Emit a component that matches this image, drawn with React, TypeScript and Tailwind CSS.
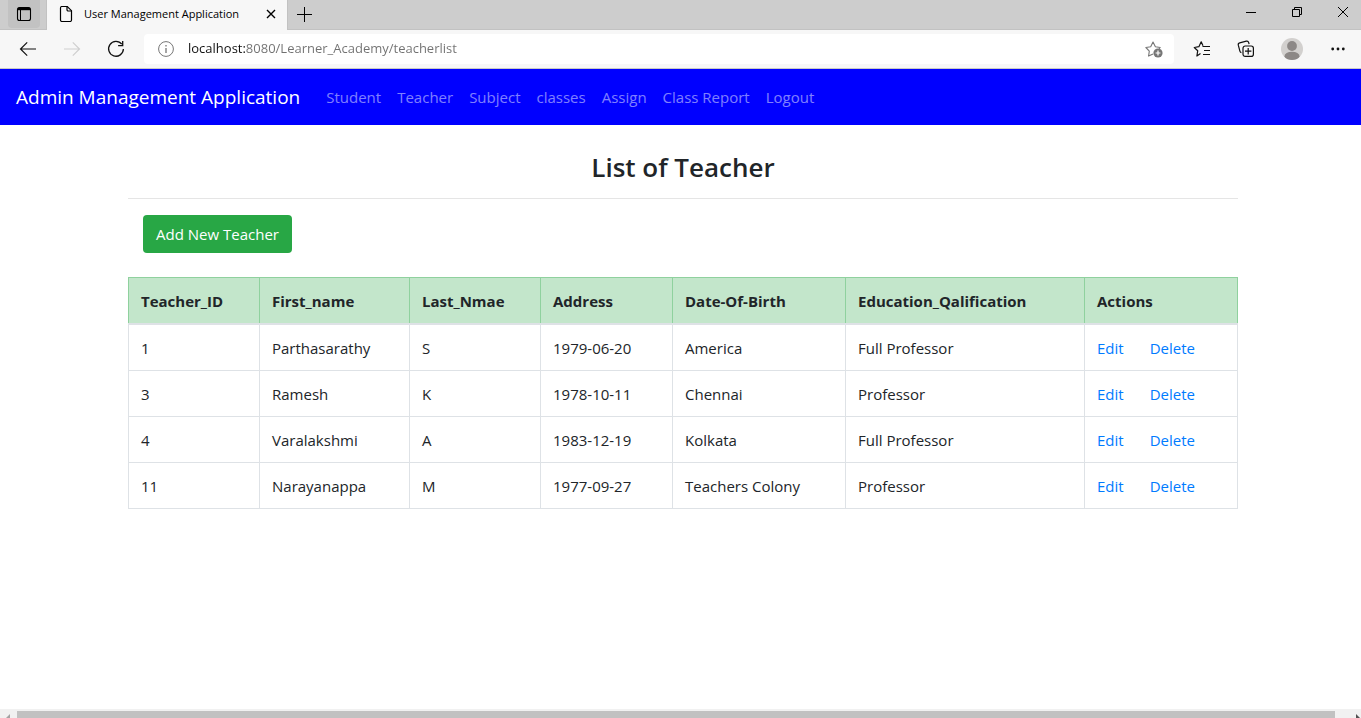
import type { ReactNode } from "react";

type Teacher = {
  id: number;
  first: string;
  last: string;
  address: string;
  birth: string;
  education: string;
};

const navItems = ["Student", "Teacher", "Subject", "classes", "Assign", "Class Report", "Logout"];

const columns = [
  { label: "Teacher_ID", width: "w-[131px]" },
  { label: "First_name", width: "w-[150px]" },
  { label: "Last_Nmae", width: "w-[131px]" },
  { label: "Address", width: "w-[132px]" },
  { label: "Date-Of-Birth", width: "w-[173px]" },
  { label: "Education_Qalification", width: "w-[239px]" },
  { label: "Actions", width: "w-[153px]" },
];

const teachers: Teacher[] = [
  { id: 1, first: "Parthasarathy", last: "S", address: "1979-06-20", birth: "America", education: "Full Professor" },
  { id: 3, first: "Ramesh", last: "K", address: "1978-10-11", birth: "Chennai", education: "Professor" },
  { id: 4, first: "Varalakshmi", last: "A", address: "1983-12-19", birth: "Kolkata", education: "Full Professor" },
  { id: 11, first: "Narayanappa", last: "M", address: "1977-09-27", birth: "Teachers Colony", education: "Professor" },
];

function IconButton({ label, className, children }: { label: string; className: string; children: ReactNode }) {
  return (
    <button type="button" aria-label={label} className={`flex shrink-0 items-center justify-center ${className}`}>
      {children}
    </button>
  );
}

function TabBar() {
  return (
    <div className="flex h-[30px] items-start border-b border-[#c2c2c2] bg-[#cdcdcd] pl-2 text-black">
      <IconButton label="Tab actions" className="h-7 w-8 rounded-b bg-[#c2c2c2]">
        <svg width="16" height="16" viewBox="0 0 16 16" fill="none" stroke="currentColor">
          <rect x="1.5" y="1.5" width="13" height="13" rx="2" strokeWidth="1.1" />
          <path d="M2 3h12" strokeWidth="2.4" />
          <path d="M4.5 4v10.5" />
        </svg>
      </IconButton>
      <div className="ml-1.5 flex h-[30px] w-[242px] items-center border-x border-[#c2c2c2] bg-[#f7f7f7] pb-0.5 pl-3">
        <svg width="14" height="18" viewBox="0 0 14 18" fill="none" stroke="currentColor" strokeWidth="1.2" className="shrink-0">
          <path d="M2.5 1.5h5.8l4.2 4.2v9.3a1.5 1.5 0 0 1-1.5 1.5H2.5a1.5 1.5 0 0 1-1-1.5v-12a1.5 1.5 0 0 1 1-1.5z" />
          <path d="M8 1.5v3.3a1.2 1.2 0 0 0 1.2 1.2h3.3" />
        </svg>
        <span className="ml-[11px] flex-1 whitespace-nowrap text-[11px]">User Management Application</span>
        <IconButton label="Close tab" className="h-6 w-8">
          <svg width="10" height="10" viewBox="0 0 10 10" stroke="currentColor" strokeWidth="1.4">
            <path d="M1 1l8 8M9 1l-8 8" />
          </svg>
        </IconButton>
      </div>
      <IconButton label="New tab" className="h-7 w-[33px]">
        <svg width="15" height="15" viewBox="0 0 15 15" stroke="currentColor">
          <path d="M7.5 0v15M0 7.5h15" />
        </svg>
      </IconButton>
      <div className="ml-auto flex gap-2.5">
        <IconButton label="Minimize" className="h-6 w-9">
          <svg width="10" height="10" viewBox="0 0 10 10" stroke="currentColor">
            <path d="M0 5.5h10" />
          </svg>
        </IconButton>
        <IconButton label="Restore" className="h-6 w-9">
          <svg width="10" height="10" viewBox="0 0 10 10" fill="none" stroke="currentColor">
            <path d="M.5 2.5h7v7h-7zM2.5 2.5v-2h7v7h-2" />
          </svg>
        </IconButton>
        <IconButton label="Close window" className="h-6 w-9">
          <svg width="10" height="10" viewBox="0 0 10 10" stroke="currentColor">
            <path d="M0 0l10 10M10 0L0 10" />
          </svg>
        </IconButton>
      </div>
    </div>
  );
}

function Toolbar() {
  return (
    <div className="flex h-[39px] items-center border-b border-[#c8c8c8] bg-[#f7f7f7] pl-1.5 text-[#111]">
      <IconButton label="Back" className="h-8 w-11">
        <svg width="18" height="16" viewBox="0 0 18 16" fill="none" stroke="currentColor" strokeWidth="1.2">
          <path d="M17 8H1.5M8.2 1.3L1.5 8l6.7 6.7" />
        </svg>
      </IconButton>
      <IconButton label="Forward" className="h-8 w-11 text-[#cfcfcf]">
        <svg width="18" height="16" viewBox="0 0 18 16" fill="none" stroke="currentColor" strokeWidth="1.2">
          <path d="M1 8h15.5M9.8 1.3L16.5 8l-6.7 6.7" />
        </svg>
      </IconButton>
      <IconButton label="Refresh" className="h-8 w-11">
        <svg width="18" height="18" viewBox="0 0 18 18" fill="none" stroke="currentColor" strokeWidth="1.3">
          <path d="M14.8 4.2A7.4 7.4 0 1 0 16.4 9" />
          <path d="M15.7 1v4.6h-4.6" />
        </svg>
      </IconButton>
      <div className="ml-1.5 flex h-[30px] flex-1 items-center rounded bg-white pl-3.5">
        <svg width="16" height="16" viewBox="0 0 16 16" fill="none" stroke="#767676" className="shrink-0">
          <circle cx="8" cy="8" r="7.4" />
          <path d="M8 7v5M8 4v1.5" strokeWidth="1.3" />
        </svg>
        <input
          type="text"
          aria-label="Address bar"
          defaultValue="localhost:8080/Learner_Academy/teacherlist"
          className="ml-3.5 min-w-0 flex-1 bg-linear-to-r from-[#111] from-[58px] to-[#707070] to-[58px] bg-clip-text text-[13px] text-transparent caret-black outline-none"
        />
        <IconButton label="Add this page to favorites" className="h-7 w-10 text-[#767676]">
          <svg width="18" height="18" viewBox="0 0 18 18" fill="none" stroke="currentColor" strokeWidth="1.1">
            <path d="M8 14L3.6 16.1l.7-5L.9 7.5l4.8-.8L8 2l2.4 4.7 4.8.8-1.2 1.3" strokeLinejoin="round" />
            <circle cx="13" cy="13" r="4.6" fill="currentColor" stroke="none" />
            <path d="M13 10.6v4.8M10.6 13h4.8" stroke="#fff" strokeWidth="1.2" />
          </svg>
        </IconButton>
      </div>
      <IconButton label="Favorites" className="ml-1.5 h-8 w-11">
        <svg width="18" height="18" viewBox="0 0 18 18" fill="none" stroke="currentColor" strokeWidth="1.2" strokeLinejoin="round">
          <path d="M7.5 13.6L3.9 16l.8-5.2L1.3 7.5l4.6-.8 2.3-4.9L10 5.8" />
          <path d="M9.5 6.5h7.5M11 10.5h6M10 14.5h7" />
        </svg>
      </IconButton>
      <IconButton label="Collections" className="h-8 w-11">
        <svg width="18" height="18" viewBox="0 0 18 18" fill="none" stroke="currentColor" strokeWidth="1.2">
          <path d="M4.4 12.6a2 2 0 0 1-1.5-1.5L1.3 5.2a2 2 0 0 1 1.4-2.4l6.6-1.6a2 2 0 0 1 2.4 1.4l.4 1.6" />
          <rect x="6" y="6" width="10.4" height="10.4" rx="2.2" />
          <path d="M11.2 8v6.4M8 11.2h6.4" />
        </svg>
      </IconButton>
      <IconButton label="Profile" className="h-8 w-[47px]">
        <svg width="22" height="22" viewBox="0 0 22 22">
          <clipPath id="avatar">
            <circle cx="11" cy="11" r="11" />
          </clipPath>
          <g clipPath="url(#avatar)">
            <rect width="22" height="22" fill="#d2d0ce" />
            <circle cx="11" cy="8" r="4.9" fill="#8c8886" />
            <ellipse cx="11" cy="18.5" rx="7.6" ry="4.8" fill="#8c8886" />
          </g>
        </svg>
      </IconButton>
      <IconButton label="Settings and more" className="h-8 w-[46px]">
        <svg width="14" height="4" viewBox="0 0 14 4" fill="currentColor">
          <circle cx="1.7" cy="2" r="1.4" />
          <circle cx="7" cy="2" r="1.4" />
          <circle cx="12.3" cy="2" r="1.4" />
        </svg>
      </IconButton>
    </div>
  );
}

function TeacherTable() {
  return (
    <table className="mt-6 w-full table-fixed border-collapse text-left text-[15px] leading-6">
      <thead className="bg-[#c3e6cb]">
        <tr>
          {columns.map((column) => (
            <th
              key={column.label}
              scope="col"
              className={`border border-b-2 border-[#8fd19e] border-b-[#dee2e6] px-3 pt-[11px] pb-2.5 font-bold ${column.width}`}
            >
              {column.label}
            </th>
          ))}
        </tr>
      </thead>
      <tbody>
        {teachers.map((teacher) => (
          <tr key={teacher.id} className="h-[46px]">
            {[teacher.id, teacher.first, teacher.last, teacher.address, teacher.birth, teacher.education].map((value, index) => (
              <td key={index} className="border border-[#dee2e6] px-3 pt-0.5">
                {value}
              </td>
            ))}
            <td className="border border-[#dee2e6] px-3 pt-0.5">
              <div className="flex gap-[26px] text-[#007bff]">
                <a href="#edit">Edit</a>
                <a href="#delete">Delete</a>
              </div>
            </td>
          </tr>
        ))}
      </tbody>
    </table>
  );
}

export default function App() {
  return (
    <div className="flex min-h-screen flex-col bg-white font-['Open_Sans','Noto_Sans',sans-serif] text-[#212529]">
      <TabBar />
      <Toolbar />
      <nav className="flex h-14 items-center bg-[#0000ff] pl-4">
        <a href="#home" className="mr-[26px] text-[19px] text-white">
          Admin Management Application
        </a>
        <div className="flex gap-4 text-[15px] text-white/50">
          {navItems.map((item) => (
            <a key={item} href="#nav">
              {item}
            </a>
          ))}
        </div>
      </nav>
      <main className="flex-1 pt-6 pr-[123px] pl-32">
        <h3 className="text-center text-[26px] leading-9 font-semibold">List of Teacher</h3>
        <hr className="mt-[13px] border-black/10" />
        <div className="mt-4 pl-[15px]">
          <a href="#new" className="inline-flex h-[38px] items-center rounded bg-[#28a745] px-[13px] text-[15px] text-white">
            Add New Teacher
          </a>
        </div>
        <TeacherTable />
      </main>
      <div className="flex h-[9px] items-end overflow-hidden bg-[#f1f1f1]">
        <svg width="17" height="7" viewBox="0 0 17 7" fill="#a3a3a3">
          <path d="M10 3v4H6z" />
        </svg>
        <div className="h-[7px] flex-1 bg-[#c1c1c1]" />
        <svg width="26" height="7" viewBox="0 0 26 7" fill="#505050">
          <path d="M21 3v4h4z" />
        </svg>
      </div>
    </div>
  );
}
